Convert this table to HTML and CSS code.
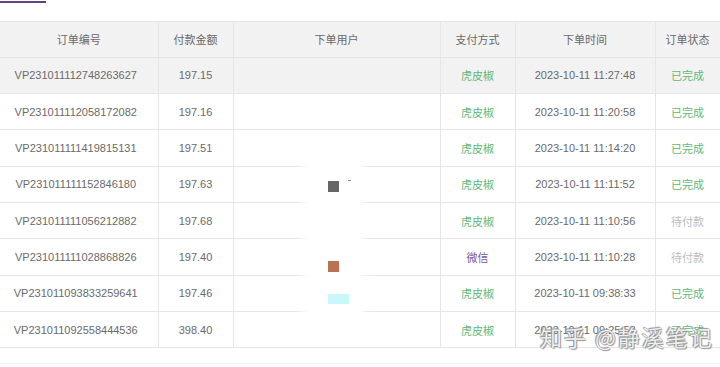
FILE: index.html
```html
<!DOCTYPE html>
<html>
<head>
<meta charset="utf-8">
<link rel="stylesheet" href="styles.css">
</head>
<body>
<div class="tabbar"><span class="tab-line"></span></div>
<div class="wrap">
<table class="orders">
  <colgroup>
    <col style="width:158px"><col style="width:75px"><col style="width:207px"><col style="width:75px"><col style="width:140px"><col style="width:65px">
  </colgroup>
  <thead>
    <tr><th>订单编号</th><th>付款金额</th><th>下单用户</th><th>支付方式</th><th>下单时间</th><th>订单状态</th></tr>
  </thead>
  <tbody>
    <tr class="hover"><td>VP231011112748263627</td><td>197.15</td><td></td><td class="hupi">虎皮椒</td><td>2023-10-11 11:27:48</td><td class="done">已完成</td></tr>
    <tr><td>VP231011112058172082</td><td>197.16</td><td></td><td class="hupi">虎皮椒</td><td>2023-10-11 11:20:58</td><td class="done">已完成</td></tr>
    <tr><td>VP231011111419815131</td><td>197.51</td><td></td><td class="hupi">虎皮椒</td><td>2023-10-11 11:14:20</td><td class="done">已完成</td></tr>
    <tr><td>VP231011111152846180</td><td>197.63</td><td></td><td class="hupi">虎皮椒</td><td>2023-10-11 11:11:52</td><td class="done">已完成</td></tr>
    <tr><td>VP231011111056212882</td><td>197.68</td><td></td><td class="hupi">虎皮椒</td><td>2023-10-11 11:10:56</td><td class="wait">待付款</td></tr>
    <tr><td>VP231011111028868826</td><td>197.40</td><td></td><td class="wx">微信</td><td>2023-10-11 11:10:28</td><td class="wait">待付款</td></tr>
    <tr><td>VP231011093833259641</td><td>197.46</td><td></td><td class="hupi">虎皮椒</td><td>2023-10-11 09:38:33</td><td class="done">已完成</td></tr>
    <tr><td>VP231011092558444536</td><td>398.40</td><td></td><td class="hupi">虎皮椒</td><td>2023-10-11 09:25:58</td><td class="done">已完成</td></tr>
  </tbody>
</table>
<div class="redact"></div>
<span class="sq sq-gray"></span>
<span class="sq-dot"></span>
<span class="sq sq-brown"></span>
<span class="sq sq-cyan"></span>
<div class="watermark">知乎 @静溪笔记</div>
</div>
<div class="footline"></div>
</body>
</html>
```
FILE: styles.css
```css
html, body {
  margin: 0;
  padding: 0;
  background: #fff;
  width: 720px;
  overflow: hidden;
  font-family: "Liberation Sans", "Noto Sans CJK SC", sans-serif;
}
.tabbar {
  height: 19.5px;
  position: relative;
}
.tab-line {
  display: block;
  width: 46px;
  height: 2px;
  margin-top: 1px;
  background: #5e4486;
}
.wrap {
  position: relative;
}
.orders {
  border-collapse: collapse;
  table-layout: fixed;
  width: 720px;
  font-size: 11px;
  color: #6a6a6a;
}
.orders th, .orders td {
  border: 1px solid #e6e6e6;
  height: 35.3px;
  padding: 0;
  text-align: center;
  font-weight: normal;
  white-space: nowrap;
}
.orders td:first-child { padding-right: 6px; }
.orders tr > :first-child { border-left: none; }
.orders th { background: #f2f2f2; }
.orders tr.hover td { background: #f2f2f2; }
.hupi { color: #5fb878; }
.done { color: #5fb878; }
.wait { color: #bbb; }
.wx { color: #7a559e; }
.redact {
  position: absolute;
  left: 308px;
  top: 140px;
  width: 50px;
  height: 160px;
  background: #fff;
  box-shadow: 0 0 8px 6px #fff;
}
.sq {
  position: absolute;
  display: block;
}
.sq-gray { left: 328px; top: 160px; width: 11px; height: 11px; background: #666; }
.sq-dot { position: absolute; left: 348px; top: 159px; width: 3px; height: 1px; background: #888; }
.sq-brown { left: 328px; top: 240px; width: 11px; height: 11px; background: #b87352; }
.sq-cyan { left: 328px; top: 273px; width: 21px; height: 10px; background: #c9f8fb; }
.watermark {
  position: absolute;
  left: 540px;
  top: 299px;
  font-family: "Noto Sans CJK SC", sans-serif;
  font-size: 22px;
  color: rgba(255,255,255,0.9);
  letter-spacing: 2px;
  text-shadow: 0 0 1px #777, 1px 1px 1px #999, -1px -1px 1px #999;
}
.footline {
  margin-top: 15px;
  height: 1px;
  background: #f0f0f0;
}
```
